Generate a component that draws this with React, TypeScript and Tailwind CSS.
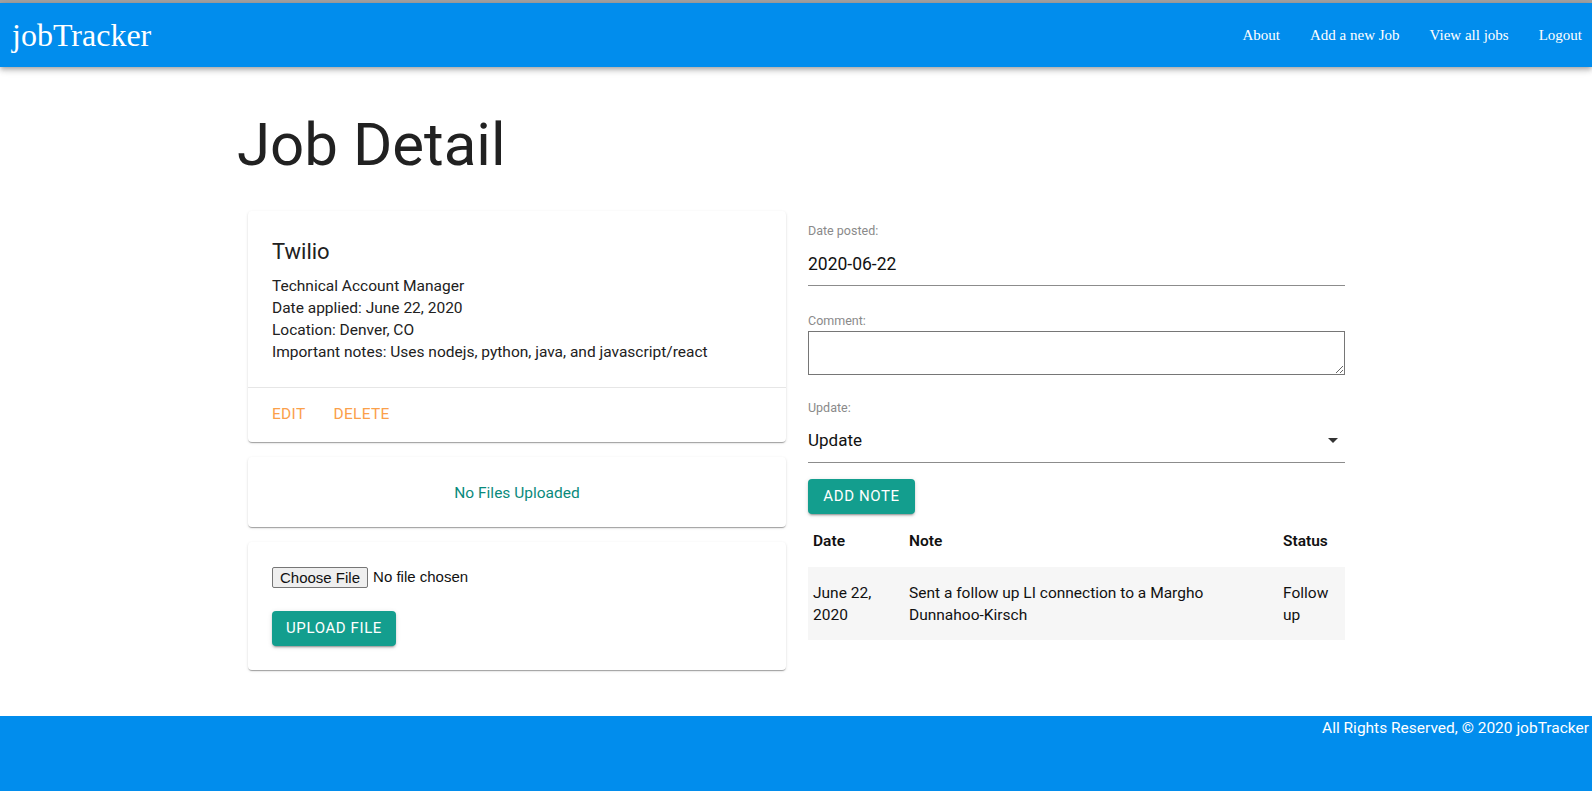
import React from "react";

const cardShadow =
  "shadow-[0_2px_1px_-1px_rgba(0,0,0,0.2),0_1px_1px_0_rgba(0,0,0,0.14),0_1px_3px_0_rgba(0,0,0,0.12)]";

const buttonShadow =
  "shadow-[0_3px_1px_-2px_rgba(0,0,0,0.2),0_2px_2px_0_rgba(0,0,0,0.14),0_1px_5px_0_rgba(0,0,0,0.12)]";

function NavBar() {
  return (
    <header className="h-[64px] bg-[#018ded] flex items-center justify-between pl-[12px] pr-[10px] shadow-[0_2px_4px_-1px_rgba(0,0,0,0.2),0_4px_5px_0_rgba(0,0,0,0.14),0_1px_10px_0_rgba(0,0,0,0.12)] relative z-10">
      <a className="text-white text-[32px] font-['Liberation_Serif',serif]">jobTracker</a>
      <nav className="flex items-center gap-[30px] text-white text-[15px] font-['Liberation_Serif',serif]">
        <a>About</a>
        <a>Add a new Job</a>
        <a>View all jobs</a>
        <a>Logout</a>
      </nav>
    </header>
  );
}

function JobCard() {
  return (
    <div className={`bg-white rounded-[4px] ${cardShadow}`}>
      <div className="px-6 pt-[25px] pb-6">
        <h2 className="text-[22px] leading-[32px]">Twilio</h2>
        <div className="mt-[7px] text-[15.5px] leading-[22px]">
          <p>Technical Account Manager</p>
          <p>Date applied: June 22, 2020</p>
          <p>Location: Denver, CO</p>
          <p>Important notes: Uses nodejs, python, java, and javascript/react</p>
        </div>
      </div>
      <div className="border-t border-[#e6e6e6] h-[55px] flex items-center gap-[28px] px-6 text-[15.5px] tracking-[0.02em] text-[#fba04a]">
        <button>EDIT</button>
        <button>DELETE</button>
      </div>
    </div>
  );
}

function FilesCard() {
  return (
    <div className={`bg-white rounded-[4px] h-[70px] pt-[3px] flex items-center justify-center ${cardShadow}`}>
      <span className="text-[15.5px] text-[#0a8a7c]">No Files Uploaded</span>
    </div>
  );
}

function UploadCard() {
  return (
    <div className={`bg-white rounded-[4px] px-6 pt-[24px] pb-6 ${cardShadow}`}>
      <div className="flex items-center gap-[5px] font-['Liberation_Sans',sans-serif] text-[15px] text-[#111]">
        <button className="h-[21px] px-[7px] leading-[19px] border border-[#767676] rounded-[2px] bg-[#efefef]">
          Choose File
        </button>
        <span>No file chosen</span>
      </div>
      <button className={`mt-[22px] h-[35px] w-[124px] rounded-[4px] bg-[#139e8e] text-white text-[15px] tracking-[0.04em] ${buttonShadow}`}>
        UPLOAD FILE
      </button>
    </div>
  );
}

function NoteForm() {
  return (
    <div className="pt-[12px]">
      <label className="block text-[12.5px] leading-[16px] text-[#8a8a8a]">Date posted:</label>
      <div className="mt-[13px] pb-[9px] border-b border-[#8c8c8c] text-[17.5px] leading-[24px] text-[#111]">
        2020-06-22
      </div>

      <label className="block mt-[27px] text-[12.5px] leading-[16px] text-[#8a8a8a]">Comment:</label>
      <textarea className="block mt-[2px] w-full h-[44px] border border-[#767676] resize-y" />

      <label className="block mt-[25px] text-[12.5px] leading-[16px] text-[#8a8a8a]">Update:</label>
      <div className="mt-[12px] pb-[10px] border-b border-[#8c8c8c] flex items-center justify-between text-[17px] leading-[24px] text-[#111]">
        <span>Update</span>
        <svg width="10" height="5" viewBox="0 0 10 5" className="mr-[7px]">
          <path d="M0 0h10L5 5z" fill="#333" />
        </svg>
      </div>

      <button className={`mt-[16px] h-[35px] w-[107px] rounded-[4px] bg-[#139e8e] text-white text-[15px] tracking-[0.04em] ${buttonShadow}`}>
        ADD NOTE
      </button>
    </div>
  );
}

const notes = [
  { date: "June 22, 2020", note: "Sent a follow up LI connection to a Margho", last: "Dunnahoo-Kirsch", status: "Follow up" },
];

function NotesTable() {
  return (
    <div className="text-[15.5px] leading-[22px] text-[#111]">
      <div className="grid grid-cols-[96px_1fr_67px] h-[53px] items-center font-semibold">
        <div className="px-[5px]">Date</div>
        <div className="px-[5px]">Note</div>
        <div className="px-[5px]">Status</div>
      </div>
      {notes.map((n) => (
        <div key={n.date} className="grid grid-cols-[96px_1fr_67px] bg-[#f6f6f6] pt-[15px] pb-[14px]">
          <div className="px-[5px]">{n.date}</div>
          <div className="px-[5px]">
            {n.note} <span className="whitespace-nowrap">{n.last}</span>
          </div>
          <div className="px-[5px]">{n.status}</div>
        </div>
      ))}
    </div>
  );
}

export default function App() {
  return (
    <div className="h-[791px] overflow-hidden bg-white text-[#212121] font-['Roboto',sans-serif]">
      <div className="h-[3px] bg-[#a3a3a3]" />
      <NavBar />
      <main className="h-[649px] pt-[48px]">
        <div className="w-[1118px] mx-auto">
          <h1 className="text-[60px] leading-[60px] font-normal">Job Detail</h1>
          <div className="mt-[36px] grid grid-cols-2">
            <div className="pl-[11px] pr-[10px] flex flex-col gap-[15px]">
              <JobCard />
              <FilesCard />
              <UploadCard />
            </div>
            <div className="pl-[12px] pr-[10px]">
              <NoteForm />
              <NotesTable />
            </div>
          </div>
        </div>
      </main>
      <footer className="h-[75px] bg-[#018ded] text-white text-right pr-[3px] text-[15.5px] leading-[24px]">
        All Rights Reserved, © 2020 jobTracker
      </footer>
    </div>
  );
}
